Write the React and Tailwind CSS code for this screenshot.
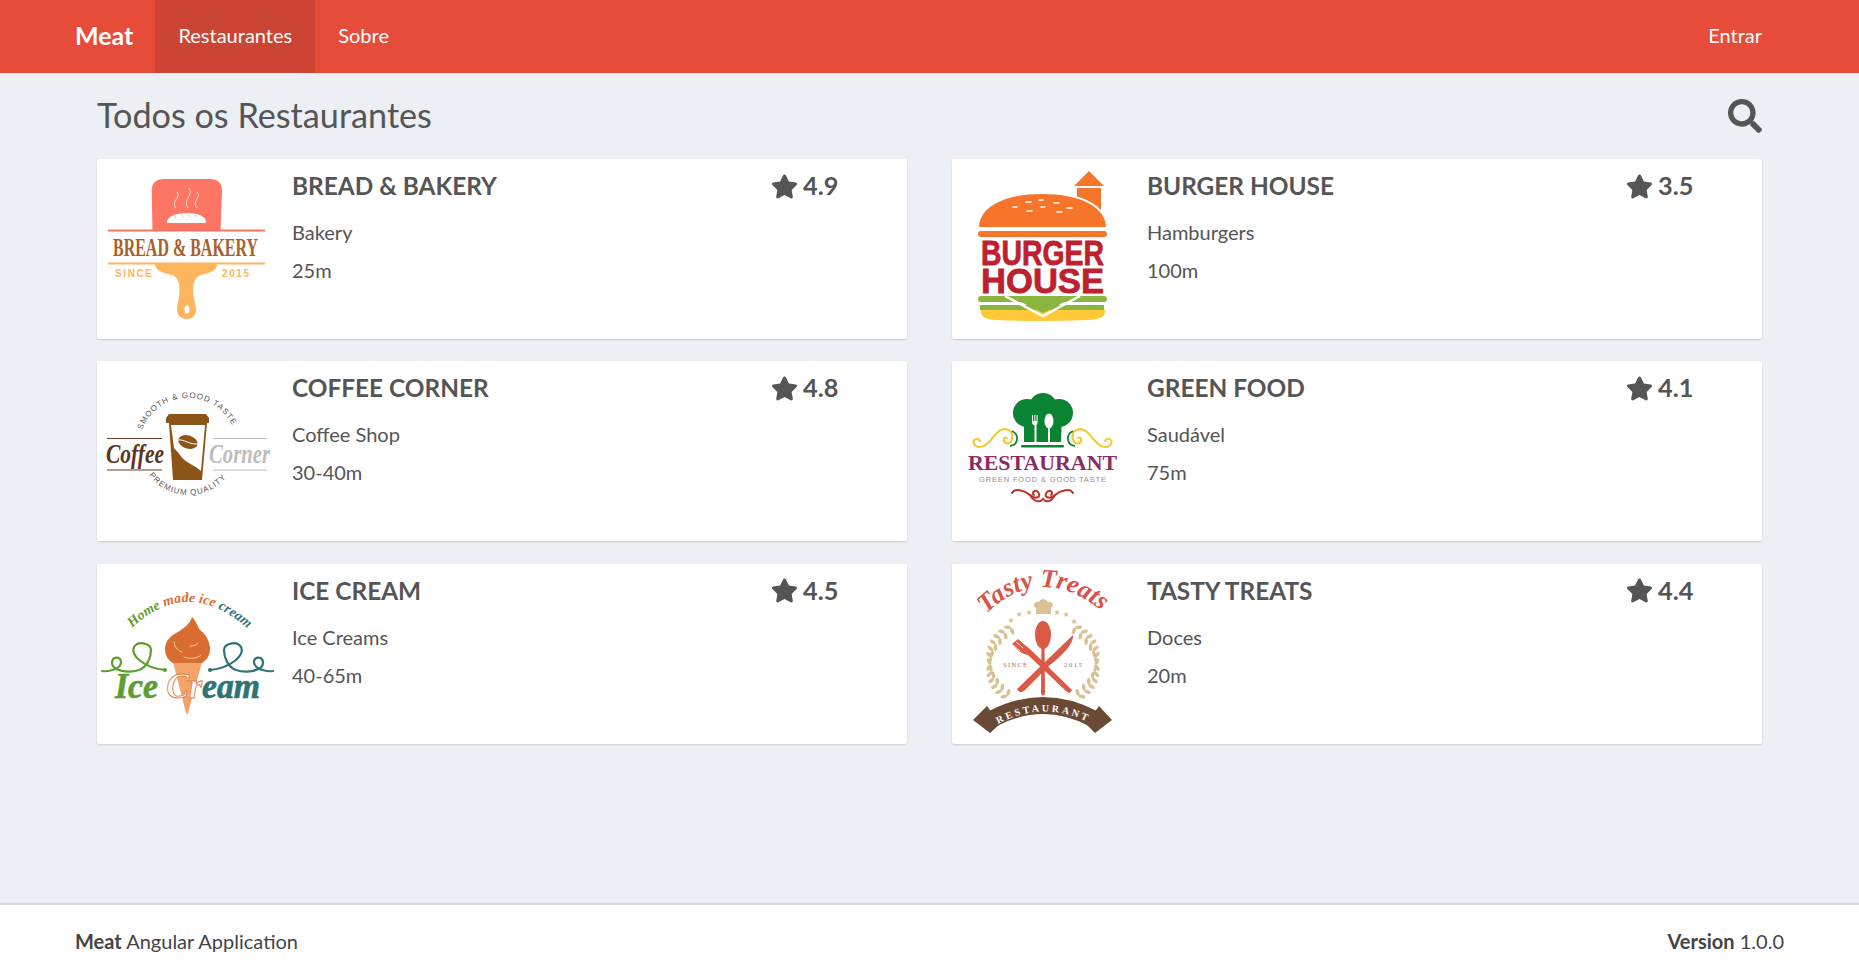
import React from 'react';
import { FaSearch, FaStar } from 'react-icons/fa';

const BreadLogo = () => (
  <svg width="195" height="180" viewBox="0 0 195 180" className="shrink-0">
    <path d="M55.500 71 L54.700 32 Q54.700 20 67 20 L113 20 Q125 20 125 32 L123.500 71 Z" fill="#fd7563" />
    <rect x="11" y="70.500" width="157" height="2" fill="#fd7563" />
    <path d="M70 64 C 69 58, 78 54, 90 54 C 102 54, 110 58, 109 64 C 96 64, 83 64, 70 64 Z" fill="#fff" />
    <path d="M77 56 l2 3 M84 55 l2 3 M91 55 l2 3 M98 56 l2 3" stroke="#c9a48a" strokeWidth="0.600" fill="none" />
    <g fill="none" stroke="#fff" strokeOpacity="0.8" strokeWidth="0.900">
      <path d="M80 33 C 85 39, 73 42, 79 49" />
      <path d="M92 29 C 97 36, 85 41, 91 49" />
      <path d="M100 33 C 105 39, 94 42, 100 49" />
    </g>
    <text x="16" y="97" fontFamily="Liberation Serif" fontWeight="700" fontSize="26" fill="#a85f2b" textLength="145" lengthAdjust="spacingAndGlyphs">BREAD &amp; BAKERY</text>
    <rect x="11" y="103.500" width="157" height="2" fill="#ffb55e" />
    <path d="M58 105 H120 C 120 112, 112 114, 104 116 C 98 118, 96 124, 96 131 C 96 140, 99 145, 99 151 C 99 157, 95 160, 90 160 C 85 160, 80 157, 80 151 C 80 145, 82.500 140, 82.500 131 C 82.500 124, 81 118, 75 116 C 67 114, 58 112, 58 105 Z" fill="#ffb55e" />
    <ellipse cx="90" cy="150.500" rx="2.500" ry="4" fill="#fff" />
    <text x="18" y="118" fontFamily="Liberation Sans" fontWeight="700" fontSize="10" fill="#ffb55e" textLength="37">SINCE</text>
    <text x="125" y="118" fontFamily="Liberation Sans" fontWeight="700" fontSize="10" fill="#ffb55e" textLength="27">2015</text>
  </svg>
);

const BurgerLogo = () => (
  <svg width="195" height="180" viewBox="0 0 195 180" className="shrink-0">
    <path d="M137 12 L152 27 H122 Z" fill="#f6752a" />
    <rect x="125" y="29" width="24" height="22" fill="#f6752a" />
    <path d="M26 69 C 26 48, 50 34, 90 34 C 130 34, 155 48, 155 69 Z" fill="#f6752a" stroke="#fff" strokeWidth="2" />
    <g fill="none" stroke="#fff" strokeWidth="1.500" strokeLinecap="round">
      <path d="M61 48 h4 M74 43 h5 M87 41 h4 M102 44 h5 M89 48 h4 M115 49 h5 M75 52 h5 M105 53 h5" />
    </g>
    <rect x="26" y="72" width="129" height="6" rx="3" fill="#f6752a" />
    <text x="29" y="106" fontFamily="Liberation Sans" fontWeight="700" fontSize="35" fill="#bd2130" stroke="#bd2130" strokeWidth="0.800" textLength="123" lengthAdjust="spacingAndGlyphs">BURGER</text>
    <text x="29" y="134" fontFamily="Liberation Sans" fontWeight="700" fontSize="35" fill="#bd2130" stroke="#bd2130" strokeWidth="0.800" textLength="123" lengthAdjust="spacingAndGlyphs">HOUSE</text>
    <rect x="26" y="137" width="129" height="6" rx="3" fill="#8ab53e" />
    <path d="M28 146 H152 V151 H28 Z" fill="#8ab53e" />
    <path d="M29 151 H153 C 154 158, 148 160, 135 161 Q 90 163 45 161 C 33 160, 28 158, 29 151 Z" fill="#fec836" />
    <path d="M57 137 H124 L91 154 Z" fill="#8ab53e" />
    <path d="M53 137 L91 157 L128 137" fill="none" stroke="#fff" strokeWidth="2.500" />
  </svg>
);

const CoffeeLogo = () => (
  <svg width="195" height="180" viewBox="0 0 195 180" className="shrink-0">
    <defs>
      <path id="coffeeTop" d="M45 69 A 49 49 0 0 1 137 69" />
      <path id="coffeeBottom" d="M52 114 A 49 49 0 0 0 131 114" />
    </defs>
    <text fontFamily="Liberation Sans" fontSize="8" fill="#555"><textPath href="#coffeeTop" textLength="114">SMOOTH &amp; GOOD TASTE</textPath></text>
    <text fontFamily="Liberation Sans" fontSize="8" fill="#555"><textPath href="#coffeeBottom" textLength="88">PREMIUM QUALITY</textPath></text>
    <path d="M72 53 H109 L112 57 V62 H69 V57 Z" fill="#8c5518" />
    <path d="M72 62 H110 L105 119 H76 Z" fill="#8c5518" />
    <path d="M74 64 H108 L104 110 C 98 104, 88 102, 83 94 C 80 90, 78 88, 77 87 Z" fill="#fff" />
    <ellipse cx="91" cy="81" rx="10" ry="6.500" fill="#8c5518" transform="rotate(18 91 81)" />
    <path d="M81 79 C 87 78, 93 84, 101 83" fill="none" stroke="#fff" strokeWidth="1" />
    <rect x="10" y="77" width="55" height="1" fill="#6b3f22" />
    <rect x="10" y="108.500" width="55" height="1" fill="#6b3f22" />
    <rect x="116" y="77" width="54" height="1" fill="#bbb" />
    <rect x="116" y="108.500" width="54" height="1" fill="#bbb" />
    <text x="9" y="102" fontFamily="Liberation Serif" fontStyle="italic" fontWeight="700" fontSize="28" fill="#5a3525" textLength="58" lengthAdjust="spacingAndGlyphs">Coffee</text>
    <text x="112" y="102" fontFamily="Liberation Serif" fontStyle="italic" fontWeight="700" fontSize="28" fill="#bdbdbd" textLength="61" lengthAdjust="spacingAndGlyphs">Corner</text>
  </svg>
);

const GreenLogo = () => (
  <svg width="195" height="180" viewBox="0 0 195 180" className="shrink-0">
    <g fill="#0a8332">
      <circle cx="75" cy="52" r="14" />
      <circle cx="91" cy="46" r="14" />
      <circle cx="107" cy="52" r="14" />
      <path d="M72 54 H110 L109 81 H72 Z" />
      <rect x="69" y="84" width="43" height="2.500" rx="1" />
    </g>
    <g fill="#fff">
      <ellipse cx="97" cy="60" rx="4.500" ry="7.500" />
      <rect x="96" y="64" width="2" height="17" />
      <rect x="82.500" y="62" width="2" height="19" />
      <path d="M80 54 h1 v6 h1.300 v-6 h1 v6 h1.300 v-6 h1 v3 v4 q0 3 -2.500 3 h-0.600 q-2.500 0 -2.500 -3 Z" />
    </g>
    <g fill="none" stroke="#f5c92e" strokeWidth="2" strokeLinecap="round">
      <path d="M28 80 C 26 76, 20 78, 22 83 C 25 88, 32 86, 36 82 C 42 76, 45 69, 52 68 C 57 68, 60 71, 60 73" />
      <path d="M153 80 C 155 76, 161 78, 159 83 C 156 88, 149 86, 145 82 C 139 76, 136 69, 129 68 C 124 68, 121 71, 121 73" />
      <path d="M60 73 C 62 78, 58 84, 54 82 C 50 80, 52 75, 55 77" />
      <path d="M121 73 C 119 78, 123 84, 127 82 C 131 80, 129 75, 126 77" />
    </g>
    <g fill="none" stroke="#0a8332" strokeWidth="1.800">
      <path d="M60 70 C 68 74, 66 84, 58 85" />
      <path d="M121 70 C 113 74, 115 84, 123 85" />
    </g>
    <text x="16" y="109" fontFamily="Liberation Serif" fontWeight="700" fontSize="21" fill="#8b2a63" textLength="149" lengthAdjust="spacingAndGlyphs">RESTAURANT</text>
    <text x="27" y="121" fontFamily="Liberation Sans" fontSize="7.500" fill="#a08a8a" textLength="127">GREEN FOOD &amp; GOOD TASTE</text>
    <g fill="none" stroke="#c0302a" strokeWidth="2" strokeLinecap="round">
      <path d="M60 132 C 63 127, 72 129, 78 134 C 84 139, 90 136, 86 131 C 83 128, 79 132, 82 134" />
      <path d="M121 132 C 118 127, 109 129, 103 134 C 97 139, 91 136, 95 131 C 98 128, 102 132, 99 134" />
      <path d="M78 134 C 82 141, 88 142, 91 138 C 94 142, 99 141, 103 134" />
    </g>
  </svg>
);

const IceCreamLogo = () => (
  <svg width="195" height="180" viewBox="0 0 195 180" className="shrink-0">
    <defs>
      <path id="iceTop" d="M35 64 Q 90 12 150 64" />
    </defs>
    <text fontFamily="Liberation Serif" fontStyle="italic" fontWeight="700" fontSize="14">
      <textPath href="#iceTop" textLength="130">
        <tspan fill="#5c9e31">Home </tspan>
        <tspan fill="#d96c30">made  ice </tspan>
        <tspan fill="#2f7373">cream</tspan>
      </textPath>
    </text>
    <path d="M76 98 H105 L91 149 Q 90 151 89 149 Z" fill="#f4a46a" />
    <path d="M95 53 C 100 58, 100 62, 103 66 C 109 70, 113 78, 113 85 C 113 93, 108 97, 105 99 H 76 C 72 97, 68 92, 68 85 C 68 76, 75 71, 81 68 C 87 64, 93 60, 95 53 Z" fill="#d96c30" />
    <g fill="none" stroke="#f4c7a5" strokeWidth="1" strokeLinecap="round">
      <path d="M77 78 C 78 85, 82 87, 85 88" />
      <path d="M87 93 C 93 95, 100 95, 104 91" />
      <path d="M93 82 C 97 82, 100 81, 101 79" />
    </g>
    <g fill="none" strokeWidth="2.200" strokeLinecap="round">
      <path d="M5 107 C 12 108, 24 105, 24 98 C 24 92, 15 92, 15 99 C 15 106, 30 110, 42 106 C 50 103, 54 94, 54 86 C 54 80, 42 76, 37 83 C 33 91, 47 104, 68 106" stroke="#5c9e31" />
      <path d="M176 107 C 169 108, 157 105, 157 98 C 157 92, 166 92, 166 99 C 166 106, 151 110, 139 106 C 131 103, 127 94, 127 86 C 127 80, 139 76, 144 83 C 148 91, 134 104, 113 106" stroke="#2f7373" />
    </g>
    <circle cx="68" cy="106" r="2" fill="#5c9e31" />
    <circle cx="113" cy="106" r="2" fill="#2f7373" />
    <text x="18" y="134" fontFamily="Liberation Serif" fontStyle="italic" fontWeight="700" fontSize="35" textLength="145" lengthAdjust="spacingAndGlyphs">
      <tspan fill="#5c9e31" stroke="#5c9e31" strokeWidth="0.700">Ice </tspan>
      <tspan fill="#fff" stroke="#de7c3e" strokeWidth="0.900">Cr</tspan>
      <tspan fill="#2f7373" stroke="#2f7373" strokeWidth="0.700">eam</tspan>
    </text>
  </svg>
);

const starPoints = [[59, 56], [67, 50], [77, 48], [105, 48], [114, 50], [122, 57]];

// wreath leaves, in pairs along a circle round the cutlery
const wreathAngles = [128, 137, 146, 155, 164, 173, 182, 191, 200, 209, 218, 227];

const WreathLeaves = ({ mirror }) => (
  <g transform={mirror ? 'translate(182 0) scale(-1 1)' : undefined} fill="#d8c192">
    {wreathAngles.map((deg) => {
      const rad = (deg * Math.PI) / 180;
      const x = 91 + 55 * Math.cos(rad);
      const y = 99 - 42 * Math.sin(rad);
      return (
        <g key={deg} transform={`translate(${x} ${y}) rotate(${deg - 90})`}>
          <ellipse cx="-3" cy="-1" rx="3.500" ry="1.800" transform="rotate(-30 -3 -1)" />
          <ellipse cx="3" cy="-1" rx="3.500" ry="1.800" transform="rotate(30 3 -1)" />
        </g>
      );
    })}
  </g>
);

const TastyLogo = () => (
  <svg width="195" height="180" viewBox="0 0 195 180" className="shrink-0">
    <defs>
      <path id="tastyTop" d="M34 50 Q 92 -6 158 54" />
      <path id="tastyBand" d="M46 160 Q 91 136 136 158" />
    </defs>
    <text fontFamily="Liberation Serif" fontStyle="italic" fontWeight="700" fontSize="26" fill="#d9534a">
      <textPath href="#tastyTop">Tasty Treats</textPath>
    </text>
    <path d="M84 50 H99 V44 C 103 42, 100 37, 96 38 C 93 34, 89 34, 87 38 C 82 37, 80 42, 84 44 Z" fill="#d8c192" />
    {starPoints.map(([x, y]) => (
      <text key={x} x={x} y={y + 3} textAnchor="middle" fontFamily="DejaVu Sans" fontSize="8" fill="#d8c192">★</text>
    ))}
    <WreathLeaves />
    <WreathLeaves mirror />
    <g fill="#da5a46">
      <ellipse cx="91" cy="71" rx="8" ry="14" />
      <path d="M89.500 80 H92.500 L93 130 Q 91 133 89 130 Z" />
      <path d="M121 71 C 122 79, 112 90, 98 101 L 72 127 Q 67 130 65 125 L 95 96 Z" />
      <path d="M66 75 L 80 87 L 120 126 Q 119 130 115 128 L 76 91 Q 68 90 60 80 Z" />
    </g>
    <g stroke="#fff" strokeWidth="0.800">
      <path d="M64 78 L 71 84 M67 75 L 74 81 M61 81 L 68 87" />
    </g>
    <text x="51" y="103" fontFamily="Liberation Serif" fontSize="6.500" fill="#c9574d" textLength="24">SINCE</text>
    <text x="112" y="103" fontFamily="Liberation Serif" fontSize="6.500" fill="#8a7a70" textLength="18">2015</text>
    <path d="M35 142 L 21 156 L 38 169 L 48 160 Z" fill="#6b4a35" />
    <path d="M147 142 L 160 156 L 143 169 L 134 160 Z" fill="#6b4a35" />
    <path d="M40 155 Q 91 128 142 155" fill="none" stroke="#6b4a35" strokeWidth="17" />
    <text fontFamily="Liberation Serif" fontWeight="700" fontSize="10" fill="#fff">
      <textPath href="#tastyBand" textLength="92">RESTAURANT</textPath>
    </text>
  </svg>
);

const restaurants = [
  { name: 'BREAD & BAKERY', category: 'Bakery', time: '25m', rating: '4.9', Logo: BreadLogo },
  { name: 'BURGER HOUSE', category: 'Hamburgers', time: '100m', rating: '3.5', Logo: BurgerLogo },
  { name: 'COFFEE CORNER', category: 'Coffee Shop', time: '30-40m', rating: '4.8', Logo: CoffeeLogo },
  { name: 'GREEN FOOD', category: 'Saudável', time: '75m', rating: '4.1', Logo: GreenLogo },
  { name: 'ICE CREAM', category: 'Ice Creams', time: '40-65m', rating: '4.5', Logo: IceCreamLogo },
  { name: 'TASTY TREATS', category: 'Doces', time: '20m', rating: '4.4', Logo: TastyLogo },
];

const RestaurantCard = ({ restaurant }) => {
  const { name, category, time, rating, Logo } = restaurant;
  return (
    <div className="flex h-[180px] rounded-[2px] bg-white shadow-[0_1px_2px_rgba(0,0,0,0.15)]">
      <Logo />
      <div className="w-[479px] pt-[11px]">
        <h3 className="text-[24.4px] leading-[32px] font-bold text-[#555]">{name}</h3>
        <p className="mt-[16px] text-[20px] leading-[28px] text-[#555]">{category}</p>
        <p className="mt-[10px] text-[20px] leading-[28px] text-[#555]">{time}</p>
      </div>
      <div className="mt-[11px] flex h-[32px] items-center gap-[5px] text-[25.300px] font-bold text-[#555]">
        <FaStar className="h-[27px] w-[27px]" />
        <span>{rating}</span>
      </div>
    </div>
  );
};

const App = () => {
  return (
    <div className="flex min-h-screen flex-col bg-[#ecf0f5] font-['Lato',sans-serif]">
      <nav className="flex h-[73px] items-stretch justify-between bg-[#e74c3a] pl-[75px] pr-[97px] text-white">
        <div className="flex items-stretch">
          <a className="flex items-center pr-[22px] pb-[1px] text-[25px] font-bold">Meat</a>
          <a className="flex items-center bg-[#cc4433] px-[23px] pb-[3px] text-[20px]">Restaurantes</a>
          <a className="flex items-center px-[23px] pb-[3px] text-[20px]">Sobre</a>
        </div>
        <a className="flex items-center pb-[3px] text-[20px]">Entrar</a>
      </nav>

      <main className="flex-1 px-[97px]">
        <div className="flex h-[86px] items-center justify-between">
          <h1 className="pb-[2px] text-[34.200px] text-[#555]">Todos os Restaurantes</h1>
          <FaSearch className="h-[34px] w-[34px] text-[#555]" />
        </div>
        <div className="grid grid-cols-2 gap-x-[45px] gap-y-[22.400px]">
          {restaurants.map((restaurant) => (
            <RestaurantCard key={restaurant.name} restaurant={restaurant} />
          ))}
        </div>
      </main>

      <footer className="flex h-[76px] items-center justify-between border-t-2 border-[#d2d6de] bg-white px-[75px] pb-[3px] text-[20px] text-[#444]">
        <div><b>Meat</b> Angular Application</div>
        <div><b>Version</b> 1.0.0</div>
      </footer>
    </div>
  );
};

export default App;
